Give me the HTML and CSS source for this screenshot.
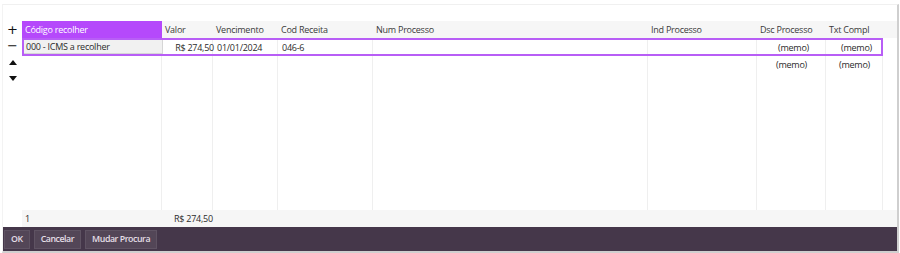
FILE: index.html
```html
<!DOCTYPE html>
<html lang="pt">
<head>
<meta charset="utf-8">
<link rel="stylesheet" href="styles.css">
</head>
<body>
<div class="window">
  <div class="main">
    <div class="gutter">
      <span class="gbtn">+</span>
      <span class="gbtn">&minus;</span>
      <span class="gbtn"><svg width="8" height="5" viewBox="0 0 8 5"><path d="M0 5L4 0L8 5Z" fill="#111"/></svg></span>
      <span class="gbtn"><svg width="8" height="5" viewBox="0 0 8 5"><path d="M0 0L4 5L8 0Z" fill="#111"/></svg></span>
    </div>
    <div class="grid">
      <div class="cols">
        <div class="col"></div><div class="col"></div><div class="col"></div><div class="col"></div>
        <div class="col"></div><div class="col"></div><div class="col"></div><div class="col"></div><div class="col"></div>
      </div>
      <div class="row head">
        <div class="cell h-sel">Código recolher</div>
        <div class="cell">Valor</div>
        <div class="cell">Vencimento</div>
        <div class="cell">Cod Receita</div>
        <div class="cell">Num Processo</div>
        <div class="cell">Ind Processo</div>
        <div class="cell">Dsc Processo</div>
        <div class="cell">Txt Compl</div>
        <div class="cell"></div>
      </div>
      <div class="row data sel">
        <div class="cell focus">000 - ICMS a recolher</div>
        <div class="cell right">R$ 274,50</div>
        <div class="cell">01/01/2024</div>
        <div class="cell">046-6</div>
        <div class="cell"></div>
        <div class="cell"></div>
        <div class="cell center">(memo)</div>
        <div class="cell center">(memo)</div>
      </div>
      <div class="row data">
        <div class="cell"></div>
        <div class="cell"></div>
        <div class="cell"></div>
        <div class="cell"></div>
        <div class="cell"></div>
        <div class="cell"></div>
        <div class="cell center">(memo)</div>
        <div class="cell center">(memo)</div>
      </div>
      <div class="filler"></div>
      <div class="row foot">
        <div class="cell">1</div>
        <div class="cell span2">R$ 274,50</div>
      </div>
    </div>
  </div>
  <div class="bar">
    <button class="btn">OK</button>
    <button class="btn">Cancelar</button>
    <button class="btn">Mudar Procura</button>
  </div>
</div>
</body>
</html>
```

FILE: styles.css
```css
html, body {
  margin: 0;
  padding: 0;
  background: #ffffff;
}
body {
  font-family: "Open Sans", "Noto Sans", sans-serif;
  font-size: 9px;
  letter-spacing: -0.25px;
  color: #2b2b2b;
}
.window {
  box-sizing: border-box;
  margin-top: 4px;
  margin-left: 2px;
  width: 897px;
  height: 249px;
  border-top: 1px solid #f0f0f0;
  border-left: 1px solid #f3f3f3;
  border-right: 2px solid #cfcfcf;
  border-bottom: 2px solid #cfcfcf;
  display: flex;
  flex-direction: column;
}
.main {
  flex: 1;
  display: flex;
  padding-top: 16px;
  min-height: 0;
}
.gutter {
  width: 19px;
  display: flex;
  flex-direction: column;
  align-items: center;
  padding-top: 0;
}
.gbtn {
  height: 16.5px;
  display: flex;
  align-items: center;
  justify-content: center;
  font-size: 13px;
  line-height: 1;
  letter-spacing: 0;
  color: #111;
  font-family: "DejaVu Sans", sans-serif;
}
.grid {
  flex: 1;
  position: relative;
  display: flex;
  flex-direction: column;
}
.cols {
  position: absolute;
  inset: 0 0 17px 0;
  display: grid;
  grid-template-columns: 140px 51px 65px 95px 275px 109px 69px 57px 1fr;
}
.col {
  border-right: 1px solid #efefef;
}
.col:last-child { border-right: none; }
.row {
  position: relative;
  display: grid;
  grid-template-columns: 140px 51px 65px 95px 275px 109px 69px 57px 1fr;
  height: 17px;
  align-items: center;
}
.cell {
  padding: 0 3px;
  white-space: nowrap;
  overflow: hidden;
  height: 100%;
  display: flex;
  align-items: center;
}
.right { justify-content: flex-end; }
.center { justify-content: center; }
.head {
  background: #f6f6f6;
  color: #3a3a3a;
}
.h-sel {
  background: #b549fb;
  color: #ffffff;
}
.data.sel {
  grid-template-columns: 140px 51px 65px 95px 275px 109px 69px 57px;
  width: 861px;
  box-sizing: border-box;
  border: 2px solid #b85ef6;
  height: 18px;
}
.data.sel .cell { padding: 0 2px; }
.data.sel .right { padding-right: 1px; }
.focus {
  background: #f1f1f1;
  box-sizing: border-box;
  border: 1px solid #d6d6d6;
  margin-right: 1px;
  border-left: none;
  border-top: none;
}
.data { height: 16px; }
.filler { flex: 1; }
.foot {
  background: #f6f6f6;
  grid-template-columns: 140px 120px 1fr;
}
.foot .cell:first-child { padding-left: 3px; }
.foot .span2 { padding-left: 12px; }
.bar {
  height: 24px;
  background: #45374a;
  display: flex;
  align-items: flex-start;
  gap: 4px;
  padding: 3px 0 0 1px;
  box-sizing: border-box;
}
.btn {
  font-family: "Open Sans", "Noto Sans", sans-serif;
  font-size: 8.8px;
  font-weight: 600;
  letter-spacing: -0.45px;
  color: #e4dfe6;
  background: #534657;
  border: 1px solid #5f5363;
  height: 19px;
  padding: 0 6px;
  margin: 0;
  line-height: 1;
}
```
